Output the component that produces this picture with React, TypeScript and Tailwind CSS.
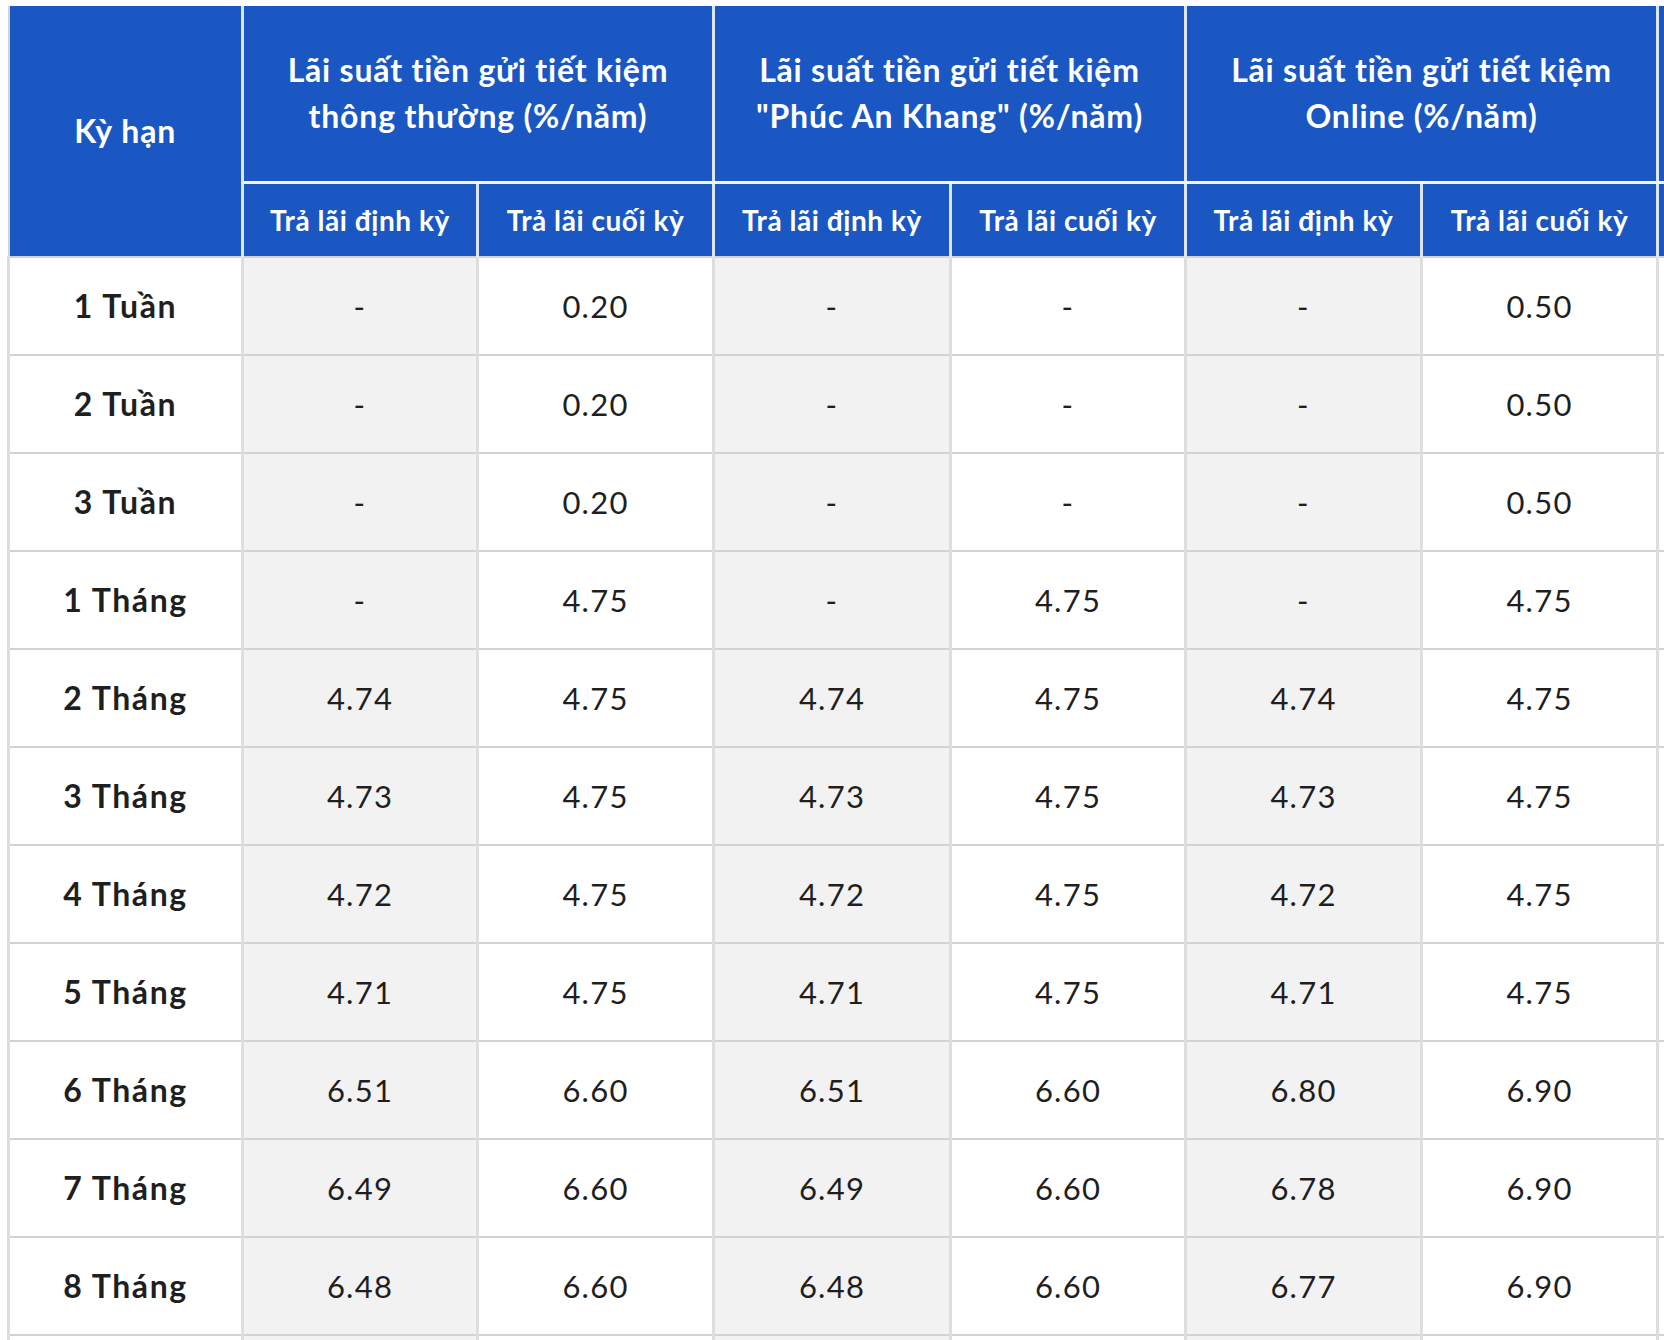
import React from "react";

type Row = { term: string; values: string[] };

const rows: Row[] = [
  { term: "1 Tuần", values: ["-", "0.20", "-", "-", "-", "0.50"] },
  { term: "2 Tuần", values: ["-", "0.20", "-", "-", "-", "0.50"] },
  { term: "3 Tuần", values: ["-", "0.20", "-", "-", "-", "0.50"] },
  { term: "1 Tháng", values: ["-", "4.75", "-", "4.75", "-", "4.75"] },
  { term: "2 Tháng", values: ["4.74", "4.75", "4.74", "4.75", "4.74", "4.75"] },
  { term: "3 Tháng", values: ["4.73", "4.75", "4.73", "4.75", "4.73", "4.75"] },
  { term: "4 Tháng", values: ["4.72", "4.75", "4.72", "4.75", "4.72", "4.75"] },
  { term: "5 Tháng", values: ["4.71", "4.75", "4.71", "4.75", "4.71", "4.75"] },
  { term: "6 Tháng", values: ["6.51", "6.60", "6.51", "6.60", "6.80", "6.90"] },
  { term: "7 Tháng", values: ["6.49", "6.60", "6.49", "6.60", "6.78", "6.90"] },
  { term: "8 Tháng", values: ["6.48", "6.60", "6.48", "6.60", "6.77", "6.90"] },
  // next row only peeks in at the bottom edge
  { term: "", values: ["", "", "", "", "", ""] },
];

const groups = [
  ["Lãi suất tiền gửi tiết kiệm", "thông thường (%/năm)"],
  ["Lãi suất tiền gửi tiết kiệm", "\"Phúc An Khang\" (%/năm)"],
  ["Lãi suất tiền gửi tiết kiệm", "Online (%/năm)"],
];

const colWidths = [234, 235, 236, 237, 235, 236, 236, 236];

const headCell =
  "border-x-[3px] border-[#dce6f6] bg-[#1a57c3] text-white font-bold text-center align-middle p-0";
const bodyCell =
  "border-x-[3px] border-x-[#dedede] border-y-2 border-y-[#d3d3d3] text-center align-middle p-0 text-[#1f1f1f]";

export default function App() {
  return (
    <div
      className="w-[1664px] h-[1340px] overflow-hidden bg-white pt-[6px] pl-[7px]"
      style={{ fontFamily: "Lato, 'Noto Sans', sans-serif" }}
    >
      <table className="table-fixed border-collapse w-[1885px] border-l-2 border-[#d3d3d3]">
        <colgroup>
          {colWidths.map((w, i) => (
            <col key={i} style={{ width: w }} />
          ))}
        </colgroup>
        <thead>
          <tr className="h-[176px]">
            <th
              rowSpan={2}
              className={`${headCell} border-l-0 text-[32px] tracking-[0.03em]`}
            >
              Kỳ hạn
            </th>
            {groups.map((g, i) => (
              <th
                key={i}
                colSpan={2}
                className={`${headCell} border-b-[3px] border-b-[#f2f6fc] text-[32px] leading-[46px] tracking-[0.025em]`}
              >
                {g[0]}
                <br />
                {g[1]}
              </th>
            ))}
            <th colSpan={2} className={`${headCell} border-b-[3px] border-b-[#f2f6fc]`} />
          </tr>
          <tr className="h-[75px]">
            {Array.from({ length: 8 }).map((_, i) =>
              i < 6 ? (
                <th key={i} className={`${headCell} text-[28px] tracking-[0.02em]`}>
                  {i % 2 === 0 ? "Trả lãi định kỳ" : "Trả lãi cuối kỳ"}
                </th>
              ) : (
                <th key={i} className={headCell} />
              )
            )}
          </tr>
        </thead>
        <tbody>
          {rows.map((r, idx) => (
            <tr key={idx} className="h-[98px]">
              <td
                className={`${bodyCell} font-bold bg-white text-[32px] tracking-[0.05em]`}
              >
                {r.term}
              </td>
              {r.values.map((v, i) => (
                <td
                  key={i}
                  className={`${bodyCell} text-[31px] tracking-[0.04em] ${
                    i % 2 === 0 ? "bg-[#f2f2f2]" : "bg-white"
                  }`}
                >
                  {v}
                </td>
              ))}
              <td className={`${bodyCell} bg-white`} />
            </tr>
          ))}
        </tbody>
      </table>
    </div>
  );
}
